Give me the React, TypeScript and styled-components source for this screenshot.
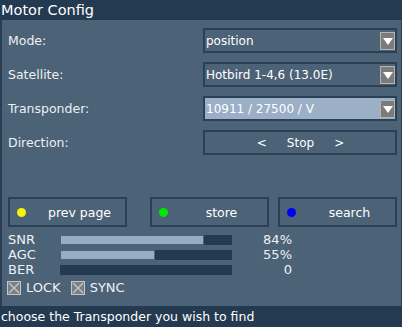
import styled, { createGlobalStyle } from "styled-components";

const GlobalStyle = createGlobalStyle`
  html, body {
    margin: 0;
    padding: 0;
    background: #4c6277;
  }
  * {
    box-sizing: border-box;
  }
`;

const rows = [
  { label: "Mode:", value: "position" },
  { label: "Satellite:", value: "Hotbird 1-4,6 (13.0E)" },
  { label: "Transponder:", value: "10911 / 27500 / V", active: true },
];

const buttons = [
  { label: "prev page", color: "#f5f500", after: 23 },
  { label: "store", color: "#00e800", after: 9 },
  { label: "search", color: "#0000f0", after: 0 },
];

const meters = [
  { label: "SNR", value: 84, text: "84%" },
  { label: "AGC", value: 55, text: "55%" },
  { label: "BER", value: 0, text: "0" },
];

export default function App() {
  return (
    <Window>
      <GlobalStyle />
      <TitleBar>Motor Config</TitleBar>
      <Body>
        <Form>
          {rows.map(row => (
            <Row key={row.label}>
              <Label>{row.label}</Label>
              <Field $active={row.active}>
                <FieldText>{row.value}</FieldText>
                <DropButton>
                  <svg width='10' height='7' viewBox='0 0 10 7'>
                    <polygon points='0,0 10,0 5,7' fill='#ffffff' />
                  </svg>
                </DropButton>
              </Field>
            </Row>
          ))}
          <Row>
            <Label>Direction:</Label>
            <Field $center>
              <span>&lt;</span>
              <span>Stop</span>
              <span>&gt;</span>
            </Field>
          </Row>
        </Form>

        <ButtonRow>
          {buttons.map(b => (
            <ColorButton key={b.label} $after={b.after}>
              <Dot $color={b.color} />
              <ButtonText>{b.label}</ButtonText>
            </ColorButton>
          ))}
        </ButtonRow>

        <Meters>
          {meters.map(m => (
            <MeterRow key={m.label}>
              <span>{m.label}</span>
              <Track>
                {m.value > 0 && <Fill style={{ width: `${m.value}%` }} />}
              </Track>
              <MeterValue>{m.text}</MeterValue>
            </MeterRow>
          ))}
        </Meters>

        <Flags>
          <Flag>
            <CheckBox />
            LOCK
          </Flag>
          <Flag>
            <CheckBox />
            SYNC
          </Flag>
        </Flags>
      </Body>
      <Footer>choose the Transponder you wish to find</Footer>
    </Window>
  );
}

function CheckBox() {
  return (
    <svg width='14' height='14' viewBox='0 0 14 14'>
      <rect x='0.5' y='0.5' width='13' height='13' fill='#7a7f84' stroke='#c4c8cc' />
      <line x1='2' y1='2' x2='12' y2='12' stroke='#c4c8cc' strokeWidth='1.2' />
      <line x1='12' y1='2' x2='2' y2='12' stroke='#c4c8cc' strokeWidth='1.2' />
    </svg>
  );
}

const Window = styled.div`
  width: 402px;
  height: 327px;
  display: flex;
  flex-direction: column;
  background: #4c6277;
  font-family: "DejaVu Sans", "Liberation Sans", sans-serif;
  color: #eef1f4;
  overflow: hidden;
`;

const TitleBar = styled.div`
  height: 20px;
  background: #243a51;
  color: #ffffff;
  font-size: 14.5px;
  line-height: 20px;
  padding-left: 1px;
`;

const Body = styled.div`
  flex: 1;
  border-left: 2px solid #2a3e53;
  border-right: 1px solid #2a3e53;
  padding: 8px 4px 0 6px;
  display: flex;
  flex-direction: column;
`;

const Form = styled.div`
  display: flex;
  flex-direction: column;
  gap: 9px;
`;

const Row = styled.div`
  display: grid;
  grid-template-columns: 195px 194px;
  align-items: center;
  height: 25px;
`;

const Label = styled.div`
  font-size: 12.5px;
`;

const Field = styled.div<{ $active?: boolean; $center?: boolean }>`
  height: 25px;
  border: 2px solid #2b3f55;
  background: ${p => (p.$active ? "#9bb0c6" : "#4c6277")};
  display: flex;
  align-items: center;
  justify-content: ${p => (p.$center ? "center" : "space-between")};
  gap: ${p => (p.$center ? "20px" : "0")};
  padding: 0 0 0 1px;
  font-size: 12px;
  color: #ffffff;
`;

const FieldText = styled.span`
  white-space: nowrap;
`;

const DropButton = styled.div`
  width: 15px;
  height: 18px;
  background: #7b7b7b;
  border: 1px solid #b4b4b4;
  display: flex;
  align-items: center;
  justify-content: center;
  padding-top: 2px;
`;

const ButtonRow = styled.div`
  display: flex;
  margin-top: 42px;
`;

const ColorButton = styled.div<{ $after: number }>`
  width: 119px;
  height: 30px;
  margin-right: ${p => p.$after}px;
  border: 2px solid #2b3f55;
  display: flex;
  align-items: center;
  padding-left: 7px;
  font-size: 12.5px;
  color: #ffffff;
`;

const Dot = styled.span<{ $color: string }>`
  width: 9px;
  height: 9px;
  border-radius: 50%;
  background: ${p => p.$color};
  flex: none;
`;

const ButtonText = styled.span`
  flex: 1;
  text-align: center;
  padding-left: 8px;
`;

const Meters = styled.div`
  margin-top: 5px;
  display: flex;
  flex-direction: column;
`;

const MeterRow = styled.div`
  display: grid;
  grid-template-columns: 52px 172px 60px;
  align-items: center;
  height: 15px;
  font-size: 13px;
`;

const Track = styled.div`
  height: 10px;
  background: #243a51;
`;

const Fill = styled.div`
  height: 100%;
  background: #98acc3;
  border: 1px solid #4c6277;
`;

const MeterValue = styled.span`
  text-align: right;
`;

const Flags = styled.div`
  display: flex;
  gap: 10px;
  margin-top: 3px;
  margin-left: -1px;
`;

const Flag = styled.div`
  display: flex;
  align-items: center;
  gap: 5px;
  font-size: 13px;
`;

const Footer = styled.div`
  height: 21px;
  background: #243a51;
  color: #ffffff;
  font-size: 12.5px;
  line-height: 21px;
  padding-left: 1px;
`;
